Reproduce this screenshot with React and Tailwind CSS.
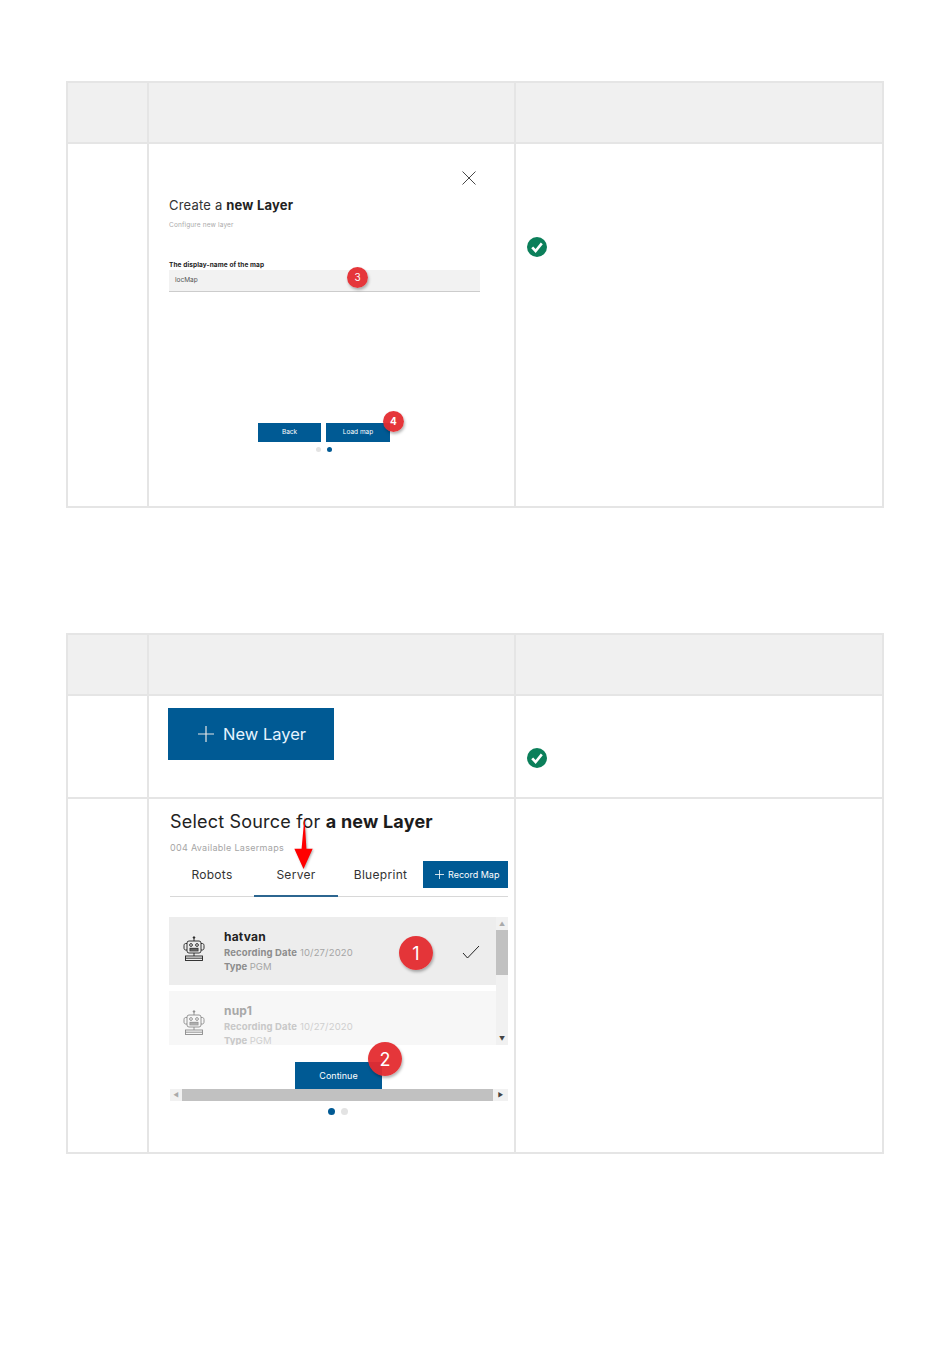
const font = { fontFamily: '"Inter", "Liberation Sans", sans-serif' };

function CheckBadge({ className }) {
  return (
    <svg viewBox="0 0 20 20" className={className}>
      <circle cx="10" cy="10" r="10" fill="#0b7f5a" />
      <path d="M5.2 10.3 L8.6 14 L14.8 6.4" fill="none" stroke="#fff" strokeWidth="2.6" />
    </svg>
  );
}

function Marker({ n, className }) {
  return (
    <div className={`absolute rounded-full bg-[#e42b2f]/95 text-white flex items-center justify-center shadow-[1px_2px_3px_rgba(0,0,0,0.3)] ${className}`}>
      {n}
    </div>
  );
}

function Robot({ className }) {
  return (
    <svg viewBox="0 0 24 26" fill="none" stroke="currentColor" strokeWidth="0.9" className={className}>
      <path d="M12 1.5v3.5" />
      <circle cx="12" cy="1.5" r="0.8" fill="currentColor" />
      <rect x="5" y="5" width="14" height="12" rx="2" />
      <circle cx="9" cy="9" r="1.4" />
      <circle cx="15" cy="9" r="1.4" />
      <rect x="8" y="12.3" width="8" height="2.6" />
      <path d="M8 13.6h8M10 12.3v2.6M12 12.3v2.6M14 12.3v2.6" strokeWidth="0.6" />
      <path d="M5 7.5H3.6C2.5 7.5 2 8.5 2 9.5v2.5c0 1 .5 2 1.6 2H5M19 7.5h1.4c1.1 0 1.6 1 1.6 2v2.5c0 1-.5 2-1.6 2H19" />
      <path d="M12 17v3" />
      <rect x="3.5" y="20" width="17" height="4.5" />
      <path d="M3.5 22.2h17" />
    </svg>
  );
}

function Table({ className, children }) {
  return (
    <div className={`w-[818px] ml-[66px] border-2 border-[#e5e5e5] ${className}`}>
      <div className="grid grid-cols-[81px_367px_1fr] h-[61px] bg-[#f0f0f0] border-b-2 border-[#e5e5e5]">
        <div className="border-r-2 border-[#e5e5e5]" />
        <div className="border-r-2 border-[#e5e5e5]" />
        <div />
      </div>
      {children}
    </div>
  );
}

function Row({ className, middle, right, middleClass = "" }) {
  return (
    <div className={`grid grid-cols-[81px_367px_1fr] ${className}`}>
      <div className="border-r-2 border-[#e5e5e5]" />
      <div className={`border-r-2 border-[#e5e5e5] relative ${middleClass}`}>{middle}</div>
      <div>{right}</div>
    </div>
  );
}

function ListRow({ name, selected }) {
  const dim = !selected;
  return (
    <div className={`flex shrink-0 h-[68px] ${selected ? "bg-[#ededed]" : "bg-[#f7f7f7]"}`}>
      <Robot className={`w-[24px] h-[26px] ml-[13px] mt-[19px] ${dim ? "text-[#8a8a8a]" : "text-[#222]"}`} />
      <div className="ml-[18px] pt-[12px]">
        <div className={`text-[12px] leading-[16px] font-bold tracking-[0.2px] ${dim ? "text-[#a8a8a8]" : "text-[#222]"}`}>{name}</div>
        <div className={`text-[9.5px] leading-[14px] mt-[1px] tracking-[0.15px] ${dim ? "text-[#c8c8c8]" : "text-[#8c8c8c]"}`}>
          <b>Recording Date</b> <span className={dim ? "text-[#cfcfcf]" : "text-[#a5a5a5]"}>10/27/2020</span>
        </div>
        <div className={`text-[9.5px] leading-[14px] ${dim ? "text-[#c8c8c8]" : "text-[#8c8c8c]"}`}>
          <b>Type</b> <span className={dim ? "text-[#cfcfcf]" : "text-[#a5a5a5]"}>PGM</span>
        </div>
      </div>
      {selected && (
        <svg viewBox="0 0 18 14" className="w-[18px] h-[14px] ml-auto mr-[16px] mt-[28px]" fill="none" stroke="#222" strokeWidth="1">
          <path d="M1 8l4.5 5L17 1" />
        </svg>
      )}
    </div>
  );
}

export default function App() {
  return (
    <div style={font} className="bg-white w-[950px] h-[1369px] pt-[81px] overflow-hidden">
      <Table className="h-[427px]">
        <Row
          className="h-[362px]"
          middleClass="pl-[20px]"
          middle={
            <>
              <div className="flex justify-end pr-[38px] pt-[27px]">
                <svg viewBox="0 0 14 14" className="w-[14px] h-[14px]" fill="none" stroke="#333" strokeWidth="0.9">
                  <path d="M0.5 0.5L13.5 13.5M13.5 0.5L0.5 13.5" />
                </svg>
              </div>
              <div className="mt-[12px] text-[13px] leading-[16px] text-[#333] tracking-[0.2px]">
                Create a <b className="text-[#222]">new Layer</b>
              </div>
              <div className="mt-[7px] text-[6.5px] leading-[10px] text-[#aaa] tracking-[0.15px]">Configure new layer</div>
              <div className="mt-[31px] text-[6.5px] leading-[9px] font-bold text-[#222] tracking-[0.1px]">The display-name of the map</div>
              <div className="w-[311px] h-[22px] bg-[#f2f2f2] border-b border-[#ccc] pl-[6px] pt-[1px] flex items-center text-[6.5px] text-[#555]">locMap</div>
              <div className="mt-[131px] ml-[89px] flex gap-[5px]">
                <div className="w-[63px] h-[19px] pt-[1px] bg-[#005a94] text-white text-[6.5px] flex items-center justify-center">Back</div>
                <div className="w-[64px] h-[19px] pt-[1px] bg-[#005a94] text-white text-[6.5px] flex items-center justify-center">Load map</div>
              </div>
              <div className="mt-[5px] ml-[147px] flex gap-[6px]">
                <div className="w-[5px] h-[5px] rounded-full bg-[#e3e3e3]" />
                <div className="w-[5px] h-[5px] rounded-full bg-[#005a94]" />
              </div>
              <Marker n="3" className="left-[198px] top-[123px] w-[21px] h-[21px] text-[10px]" />
              <Marker n="4" className="left-[234px] top-[267px] w-[21px] h-[21px] text-[10px] font-bold" />
            </>
          }
          right={<CheckBadge className="w-[20px] h-[20px] ml-[11px] mt-[93px]" />}
        />
      </Table>

      <Table className="h-[521px] mt-[125px]">
        <Row
          className="h-[103px] border-b-2 border-[#e5e5e5]"
          middleClass="pl-[19px] pt-[12px]"
          middle={
            <div className="w-[166px] h-[52px] bg-[#005a94] text-[#e6f4ff] flex items-center justify-start pl-[30px] gap-[9px] text-[16.5px]">
              <svg viewBox="0 0 16 16" className="w-[16px] h-[16px]" stroke="#e6e6e6" strokeWidth="1.2">
                <path d="M8 0v16M0 8h16" />
              </svg>
              New Layer
            </div>
          }
          right={<CheckBadge className="w-[20px] h-[20px] ml-[11px] mt-[52px]" />}
        />
        <Row
          className="h-[353px]"
          middleClass="pl-[21px]"
          middle={
            <>
              <div className="mt-[12px] text-[18px] leading-[22px] text-[#222] tracking-[0.2px]">
                Select Source for <b className="text-[#1c1c1c]">a new Layer</b>
              </div>
              <div className="mt-[9px] text-[9px] leading-[12px] text-[#a5a5a5] tracking-[0.3px]">004 Available Lasermaps</div>
              <div className="mt-[7px] w-[338px] h-[36px] border-b border-[#d8d8d8] flex items-start">
                <div className="w-[84px] h-[36px] pb-[8px] flex items-center justify-center text-[12px] text-[#333] tracking-[0.3px]">Robots</div>
                <div className="w-[84px] h-[36px] -mb-px pb-[6px] border-b-2 border-[#2c6690] flex items-center justify-center text-[12px] text-[#333] tracking-[0.3px]">Server</div>
                <div className="w-[85px] h-[36px] pb-[8px] flex items-center justify-center text-[12px] text-[#333] tracking-[0.3px]">Blueprint</div>
                <div className="w-[85px] h-[27px] bg-[#005a94] text-white flex items-center justify-start pl-[12px] gap-[4px] text-[9px]">
                  <svg viewBox="0 0 10 10" className="w-[9px] h-[9px]" stroke="#fff" strokeWidth="0.9">
                    <path d="M5 0v10M0 5h10" />
                  </svg>
                  Record Map
                </div>
              </div>
              <div className="mt-[20px] -ml-[1px] w-[339px] h-[128px] flex">
                <div className="w-[327px] flex flex-col gap-[6px] overflow-hidden">
                  <ListRow name="hatvan" selected />
                  <ListRow name="nup1" />
                </div>
                <div className="w-[12px] bg-[#f1f1f1] flex flex-col items-center">
                  <div className="h-[13px] flex items-center text-[6px] text-[#aaa] leading-none">▲</div>
                  <div className="w-[12px] h-[45px] bg-[#c1c1c1]" />
                  <div className="mt-auto h-[13px] flex items-center text-[6px] text-[#444] leading-none">▼</div>
                </div>
              </div>
              <div className="mt-[17px] ml-[125px] w-[87px] h-[27px] pt-[1px] bg-[#005a94] text-white text-[9px] flex items-center justify-center">Continue</div>
              <div className="w-[338px] h-[12px] bg-[#f1f1f1] flex items-center">
                <div className="w-[12px] text-center text-[6px] text-[#aaa] leading-none">◀</div>
                <div className="w-[311px] h-[12px] bg-[#c1c1c1]" />
                <div className="w-[15px] text-center text-[6px] text-[#444] leading-none">▶</div>
              </div>
              <div className="mt-[7px] ml-[158px] flex gap-[6px]">
                <div className="w-[7px] h-[7px] rounded-full bg-[#005a94]" />
                <div className="w-[7px] h-[7px] rounded-full bg-[#e3e3e3]" />
              </div>
              <svg viewBox="0 0 24 56" className="absolute left-[143px] top-[18px] w-[24px] h-[54px] drop-shadow-[1px_1px_1px_rgba(0,0,0,0.3)]">
                <path d="M12.5 0 L14.5 33 L21 33 L11.5 54 L2 33 L9.5 33 Z" fill="#f00" />
              </svg>
              <Marker n="1" className="left-[250px] top-[137px] w-[34px] h-[34px] text-[18px]" />
              <Marker n="2" className="left-[219px] top-[243px] w-[34px] h-[34px] text-[18px]" />
            </>
          }
          right={null}
        />
      </Table>
    </div>
  );
}
